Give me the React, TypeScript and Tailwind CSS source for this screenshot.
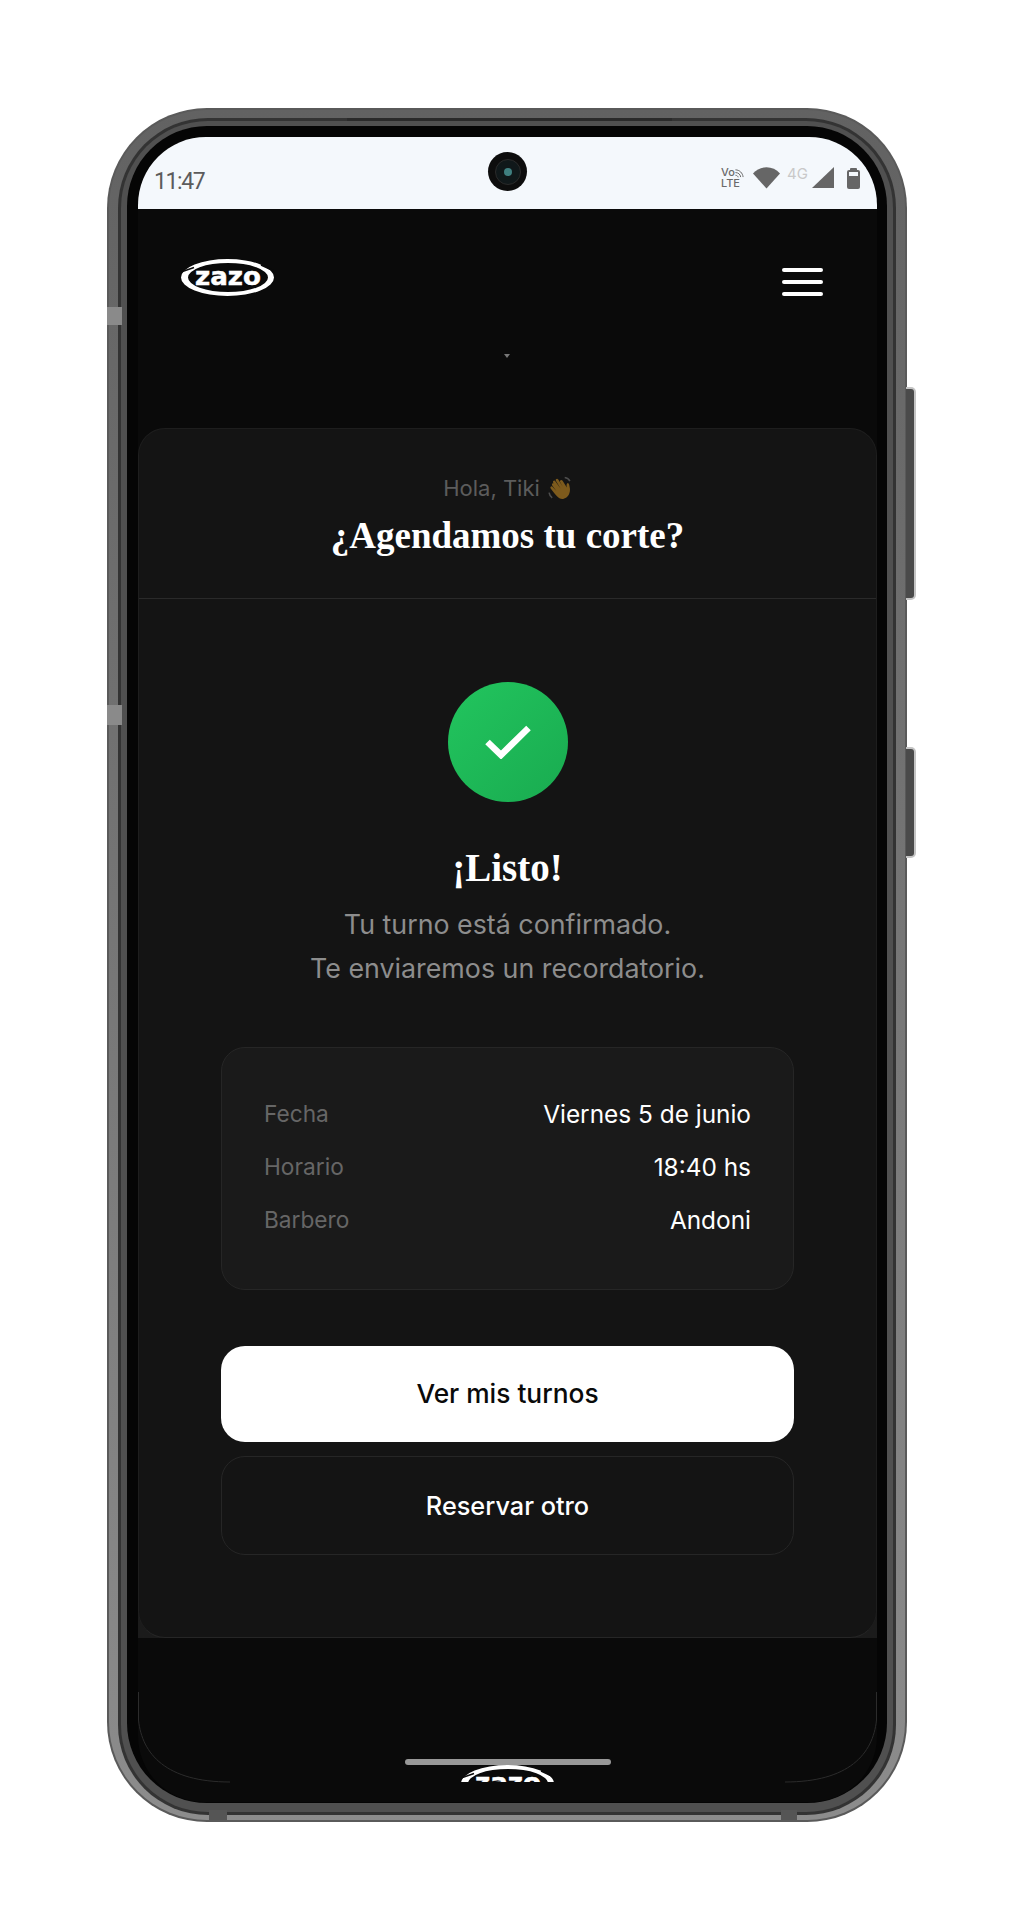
const sans = 'font-["Inter","Noto_Sans",sans-serif]';

function ZazoLogo({ className }: { className?: string }) {
  return (
    <svg viewBox="0 0 93 37" className={className}>
      <path
        fillRule="evenodd"
        d="M0 18.500A46.500 18.500 0 1 1 93 18.500A46.500 18.500 0 1 1 0 18.500ZM7 18.500A40 14.500 0 1 0 87 18.500A40 14.500 0 1 0 7 18.500Z"
        fill="#fff"
      />
      <path d="M0 13L13 8.500M80 6L93 12" stroke="#0a0a0a" strokeWidth="1.500" fill="none" />
      <text
        x="47"
        y="26"
        textAnchor="middle"
        fill="#fff"
        fontFamily="DejaVu Sans"
        fontWeight="700"
        fontSize="25"
        stroke="#fff"
        strokeWidth="0.5"
        textLength="66"
        lengthAdjust="spacingAndGlyphs"
      >
        zazo
      </text>
    </svg>
  );
}

function StatusIcons() {
  return (
    <div className="flex items-center">
      <div className={`flex flex-col w-[24px] text-[11px] font-medium text-[#6a6a6a] ${sans}`}>
        <span className="flex items-center h-[11px] leading-[11px]">
          Vo
          <svg viewBox="0 0 10 10" className="w-[9px] h-[10px]">
            <path d="M0.500 1.500C5 1.500 8.500 5 9 9.500M0.500 4.500C3.500 4.500 6 6.500 6.300 9.500M0.500 7.500C2 7.500 3.200 8.400 3.500 9.800" fill="none" stroke="#6a6a6a" strokeWidth="1.100" />
          </svg>
        </span>
        <span className="h-[11px] leading-[11px]">LTE</span>
      </div>
      <svg viewBox="0 0 27 22" className="w-[27px] h-[22px] ml-[8px]">
        <path d="M0 6.500C7 -1.800 20 -1.800 27 6.500L13.500 21.500Z" fill="#666" />
      </svg>
      <span className={`ml-[7px] w-[20px] text-[15px] leading-[15px] text-[#c9c9c9] -mt-[9px] ${sans}`}>4G</span>
      <svg viewBox="0 0 22 22" className="w-[22px] h-[22px] ml-[5px]">
        <path d="M22 0V21H0Z" fill="#666" />
      </svg>
      <div className="ml-[13px] w-[13px] h-[21px] flex flex-col items-center">
        <div className="w-[7px] h-[2px] bg-[#666] rounded-t-[1px]" />
        <div className="w-[13px] h-[19px] bg-[#666] rounded-[2px] pt-[2px] px-[2px]">
          <div className="h-[4px] bg-[#f4f8fc]" />
        </div>
      </div>
    </div>
  );
}

function WaveHand() {
  return (
    <svg viewBox="0 0 24 24" className="w-[25px] h-[25px]">
      <path
        d="M7 7L12 14L6 6.500C5 5 7 3.500 8 5L13 12L8.500 4.500C7.800 3 9.800 2 10.800 3.300L15 10L12.500 5.500C12 4 14 3 15 4.500L19 11C18.500 8.500 18.800 7 20 6.800C21.200 6.800 21.500 9 22 12C22.500 16 20.500 21 15.500 22C11 22.500 8.500 18.500 3.500 12C2.500 10.500 4.500 9 5.500 10.500L9 14.500L5 9C4 7.500 6 6 7 7Z"
        fill="#7d5a1c"
      />
      <path d="M2 16C2.300 18 3.500 20 5 21M17 1.500C19 1.800 21 3 22 5" fill="none" stroke="#4d4d4d" strokeWidth="1.500" />
    </svg>
  );
}

function DetailRow({ label, value }: { label: string; value: string }) {
  return (
    <div className="flex items-center justify-between h-[53px]">
      <span className="text-[22.7px] text-[#666]">{label}</span>
      <span className="text-[24.4px] text-white">{value}</span>
    </div>
  );
}

export default function App() {
  return (
    <div className={`relative w-[1015px] h-[1920px] bg-white pt-[108px] pl-[107px] overflow-hidden ${sans}`}>
      {/* phone shell: nested bands of the metal edge */}
      <div className="relative w-[800px] h-[1714px] rounded-[100px] bg-[#5a5a5a] p-[2px]">
        <div className="absolute right-[-9px] top-[279px] w-[10px] h-[213px] bg-[#4a4a4a] border-2 border-l-0 border-[#c4c4c4] rounded-r-[5px]" />
        <div className="absolute right-[-9px] top-[639px] w-[10px] h-[111px] bg-[#4a4a4a] border-2 border-l-0 border-[#c4c4c4] rounded-r-[5px]" />
        <div className="absolute left-0 top-[199px] w-[15px] h-[18px] bg-[#8a8a8a] z-10" />
        <div className="absolute left-0 top-[597px] w-[15px] h-[20px] bg-[#8a8a8a] z-10" />
        <div className="absolute left-[102px] bottom-[2px] w-[18px] h-[10px] bg-[#555] z-10" />
        <div className="absolute right-[110px] bottom-[2px] w-[16px] h-[10px] bg-[#555] z-10" />
        <div className="absolute left-[240px] top-[10px] w-[325px] h-[3px] bg-[#2a2a2a] z-10" />
        <div className="h-full rounded-[98px] bg-gradient-to-b from-[#626262] to-[#8c8c8c] pt-[8px] px-[9px] pb-[5px]">
          <div className="h-full rounded-[90px] bg-[#333] pt-[3px] px-[3px] pb-[3px]">
            <div className="h-full rounded-[87px] bg-[#505050] pt-[5px] px-[6px] pb-[9px]">
              <div className="h-full rounded-[80px] bg-[#050505] pt-[11px] pl-[11px] pr-[9px]">
                <div className="relative flex flex-col h-[1665px] w-[739px] rounded-t-[68px] rounded-b-[66px] bg-[#0a0a0a] overflow-hidden">
                  {/* status bar */}
                  <div className="relative flex items-center justify-between shrink-0 h-[72px] bg-[#f4f8fc] pl-[16px] pr-[17px]">
                    <span className="text-[23px] tracking-[-1.4px] text-[#5c5c5c] font-['Roboto',sans-serif] mt-[18px]">11:47</span>
                    <div className="mt-[10px]">
                      <StatusIcons />
                    </div>
                    <div className="absolute left-[350px] top-[15px] w-[39px] h-[39px] rounded-full bg-[#0d0d0d] flex items-center justify-center">
                      <div className="w-[26px] h-[26px] rounded-full border border-[#2b2b2b] bg-[#10181a] flex items-center justify-center">
                        <div className="w-[8px] h-[8px] rounded-full bg-[#3f7f80]" />
                      </div>
                    </div>
                  </div>

                  {/* header */}
                  <div className="shrink-0 h-[219px] pl-[43px] pr-[54px] pt-[50px]">
                    <div className="flex items-start justify-between">
                      <ZazoLogo className="w-[93px] h-[37px]" />
                      <div className="flex flex-col gap-[8px] w-[41px] mt-[9px]">
                        <div className="h-[4px] bg-white rounded-full" />
                        <div className="h-[4px] bg-white rounded-full" />
                        <div className="h-[4px] bg-white rounded-full" />
                      </div>
                    </div>
                    <div className="mt-[58px] ml-[323px] w-0 h-0 border-x-[3px] border-x-transparent border-t-[4px] border-t-[#777]" />
                  </div>

                  {/* card */}
                  <div className="shrink-0 h-[1210px] bg-gradient-to-b from-[#0a0a0a] from-50% to-[#1b1b1b] to-50%">
                    <div className="h-full rounded-[27px] bg-[#141414] border border-[#1e1e1e] border-b-[#262626]">
                      <div className="h-[170px] border-b border-[#2a2a2a] flex flex-col items-center pt-[43px]">
                        <div className="flex items-center gap-[7px] h-[32px]">
                          <span className="text-[22px] text-[#5c5c5c]">Hola, Tiki</span>
                          <WaveHand />
                        </div>
                        <h1 className="mt-[10px] text-[37px] leading-[44px] font-bold text-white font-['Liberation_Serif',serif]">
                          ¿Agendamos tu corte?
                        </h1>
                      </div>

                      <div className="flex flex-col items-center px-[82px] pt-[83px]">
                        <div className="w-[120px] h-[120px] rounded-full bg-gradient-to-br from-[#22c55e] to-[#19ab50] flex items-center justify-center">
                          <svg viewBox="0 0 46 34" className="w-[46px] h-[34px]">
                            <path d="M2.500 17L16 30L43.500 3" fill="none" stroke="#fff" strokeWidth="6.500" />
                          </svg>
                        </div>
                        <h2 className="mt-[40px] text-[39px] leading-[52px] font-bold text-white font-['Liberation_Serif',serif]">
                          ¡Listo!
                        </h2>
                        <p className="mt-[8px] text-[26.8px] leading-[44px] text-[#8d8d8d] text-center">
                          Tu turno está confirmado.
                          <br />
                          Te enviaremos un recordatorio.
                        </p>

                        <div className="w-full h-[243px] mt-[57px] rounded-[24px] bg-[#1a1a1a] border border-[#262626] px-[42px] pt-[40px]">
                          <DetailRow label="Fecha" value="Viernes 5 de junio" />
                          <DetailRow label="Horario" value="18:40 hs" />
                          <DetailRow label="Barbero" value="Andoni" />
                        </div>

                        <button className="w-full h-[96px] mt-[56px] rounded-[24px] bg-white text-[26.3px] font-medium text-[#0a0a0a]">
                          Ver mis turnos
                        </button>
                        <button className="w-full h-[99px] mt-[14px] rounded-[24px] border border-[#262626] text-[25.3px] font-medium text-white">
                          Reservar otro
                        </button>
                      </div>
                    </div>
                  </div>

                  {/* bottom */}
                  <div className="relative flex-1 flex flex-col items-center">
                    <div className="h-[144px] w-full overflow-hidden flex flex-col items-center justify-end">
                      <div className="h-[17px] overflow-hidden">
                        <ZazoLogo className="w-[93px] h-[37px]" />
                      </div>
                    </div>
                    <div className="absolute top-[121px] left-[267px] w-[206px] h-[6px] rounded-full bg-[#989898]" />
                    <svg viewBox="0 0 739 92" className="absolute left-0 top-[54px] w-[739px] h-[92px]" fill="none">
                      <path d="M0.500 0V28C4 62 28 90 92 90M738.500 0V28C735 62 711 90 647 90" stroke="#2c2c2c" strokeWidth="1" />
                    </svg>
                  </div>
                </div>
              </div>
            </div>
          </div>
        </div>
      </div>
    </div>
  );
}
